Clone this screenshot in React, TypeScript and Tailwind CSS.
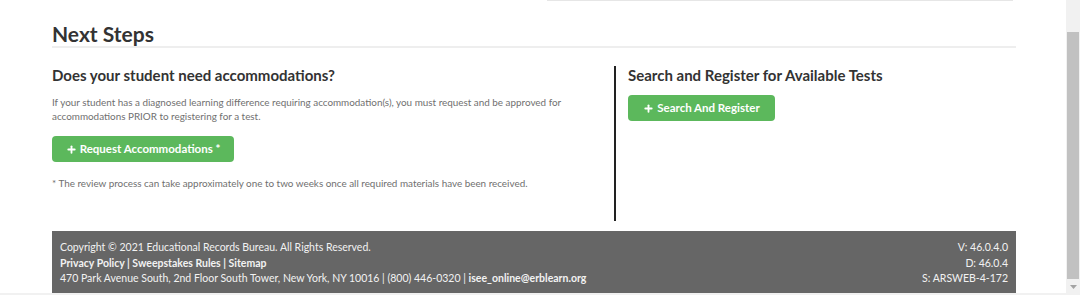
import { Plus } from 'lucide-react'

const body = "font-['Lato','Open_Sans',sans-serif]"
const head = "font-['Lato','DejaVu_Sans',sans-serif]"

function GreenButton({ label }: { label: string }) {
  return (
    <button
      type="button"
      className={`flex h-[26px] w-full items-center justify-center gap-[3px] rounded-[4px] bg-[#5cb85c] text-[11.5px] font-bold text-white ${body}`}
    >
      <Plus size={11} strokeWidth={4} />
      {label}
    </button>
  )
}

export default function App() {
  return (
    <div className="flex h-[295px] w-[1080px] overflow-hidden bg-white">
      <div className="flex flex-1 flex-col">
        <div className="flex flex-1 flex-col pl-[52px] pr-[50px]">
          <div className="ml-[495px] mr-[3px] h-px bg-[#e6e6e6]" />

          <h1 className={`mt-[20px] text-[21px] leading-[26px] font-bold text-[#333] ${head}`}>Next Steps</h1>
          <div className="mt-[-1px] h-[2px] bg-[#eeeeee]" />

          <div className="mt-[18px] flex">
            <div className="w-[564px] border-r-2 border-[#222] pb-[31px]">
              <h3 className={`pt-[1px] text-[15px] leading-[16px] font-bold text-[#333] ${head}`}>
                Does your student need accommodations?
              </h3>
              <p className={`mt-[12px] pr-[40px] text-[9.9px] leading-[14px] text-[#6f6f6f] ${body}`}>
                If your student has a diagnosed learning difference requiring accommodation(s), you must request and be approved for accommodations PRIOR to registering for a test.
              </p>
              <div className="mt-[13px] w-[182px]">
                <GreenButton label="Request Accommodations *" />
              </div>
              <p className={`mt-[14px] text-[9.9px] leading-[14px] text-[#6f6f6f] ${body}`}>
                * The review process can take approximately one to two weeks once all required materials have been received.
              </p>
            </div>
            <div className="pl-[12px] pt-[1px]">
              <h3 className={`text-[15px] leading-[16px] font-bold text-[#333] ${head}`}>
                Search and Register for Available Tests
              </h3>
              <div className="mt-[12px] w-[147px]">
                <GreenButton label="Search And Register" />
              </div>
            </div>
          </div>

          <div
            className={`mt-auto flex h-[62px] justify-between bg-[#666666] px-[8px] pt-[9px] text-[10.5px] leading-[15.5px] text-[#f2f2f2] ${body}`}
          >
            <div>
              <div>Copyright © 2021 Educational Records Bureau. All Rights Reserved.</div>
              <div className="font-bold">Privacy Policy | Sweepstakes Rules | Sitemap</div>
              <div>
                470 Park Avenue South, 2nd Floor South Tower, New York, NY 10016 | (800) 446-0320 |{' '}
                <span className="font-bold">isee_online@erblearn.org</span>
              </div>
            </div>
            <div className="text-right">
              <div>V: 46.0.4.0</div>
              <div>D: 46.0.4</div>
              <div>S: ARSWEB-4-172</div>
            </div>
          </div>
        </div>
        <div className="h-[2px] bg-[#f1f1f1]" />
      </div>

      <div className="flex w-[14px] flex-col bg-[#f1f1f1]">
        <div className="mx-[1px] mt-[32px] h-[247px] bg-[#c1c1c1]" />
        <div className="flex flex-1 items-center justify-center">
          <svg width="7" height="4" viewBox="0 0 7 4">
            <path d="M0 0 L7 0 L3.5 4 Z" fill="#a3a3a3" />
          </svg>
        </div>
      </div>
    </div>
  )
}
